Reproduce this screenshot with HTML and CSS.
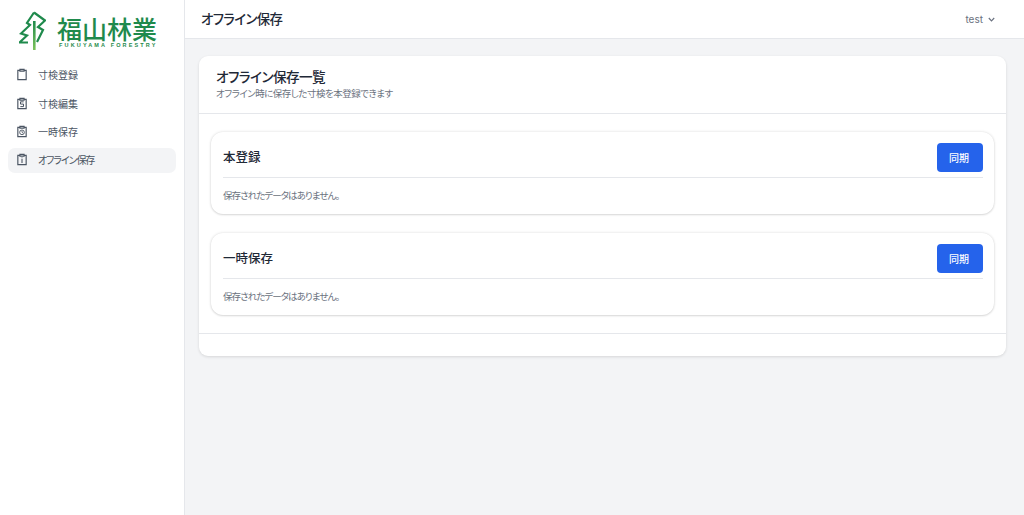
FILE: index.html
```html
<!DOCTYPE html>
<html lang="ja">
<head>
<meta charset="utf-8">
<title>オフライン保存</title>
<link rel="stylesheet" href="styles.css">
</head>
<body>
<div class="app">
  <aside class="sidebar">
    <div class="logo">
      <svg class="logo-mark" width="27" height="40" viewBox="0 0 27 40" fill="none">
        <defs>
          <linearGradient id="trunk" x1="0" y1="0" x2="0" y2="1">
            <stop offset="0" stop-color="#1f8a4c"/>
            <stop offset="1" stop-color="#7cc35a"/>
          </linearGradient>
        </defs>
        <path d="M15 1.5L8 12L11 14L2 22.5L8 24.5L.5 31.5H9" stroke="#1f8a4c" stroke-width="2.2"/>
        <path d="M15 1.5L26 9.5L19 16L24 19L18 31" stroke="#1f8a4c" stroke-width="2.2"/>
        <rect x="14" y="10" width="2.6" height="29" fill="url(#trunk)"/>
      </svg>
      <div class="logo-text">
        <div class="logo-name">福山林業</div>
        <div class="logo-sub">FUKUYAMA FORESTRY</div>
      </div>
    </div>
    <nav class="nav">
      <a class="nav-item">
        <svg class="nav-icon" viewBox="0 0 12 14" fill="none"><path d="M3.5 2H1V13.2H11V2H8.5M3.5 .9H8.5V3H3.5Z" stroke="currentColor" stroke-width="1.4"/></svg>
        <span>寸検登録</span>
      </a>
      <a class="nav-item">
        <svg class="nav-icon" viewBox="0 0 12 14" fill="none"><path d="M3.5 2H1V13.2H11V2H8.5M3.5 .9H8.5V3H3.5Z" stroke="currentColor" stroke-width="1.4"/><path d="M8 5H4.2V7.7H7.8V10.7H4" stroke="currentColor" stroke-width="1.2"/></svg>
        <span>寸検編集</span>
      </a>
      <a class="nav-item">
        <svg class="nav-icon" viewBox="0 0 12 14" fill="none"><path d="M3.5 2H1V13.2H11V2H8.5M3.5 .9H8.5V3H3.5Z" stroke="currentColor" stroke-width="1.4"/><circle cx="6" cy="8" r="2.8" stroke="currentColor" stroke-width="1.1"/><path d="M6 6.3V8L7.4 9" stroke="currentColor"/></svg>
        <span>一時保存</span>
      </a>
      <a class="nav-item active">
        <svg class="nav-icon" viewBox="0 0 12 14" fill="none"><path d="M3.5 2H1V13.2H11V2H8.5M3.5 .9H8.5V3H3.5Z" stroke="currentColor" stroke-width="1.4"/><path d="M6 6.5V11.3M6 4.6V5.6" stroke="currentColor" stroke-width="1.3"/></svg>
        <span>オフライン保存</span>
      </a>
    </nav>
  </aside>
  <div class="body">
    <header class="topbar">
      <div class="topbar-title">オフライン保存</div>
      <div class="user">
        <span>test</span>
        <svg width="7" height="5" viewBox="0 0 7 5" fill="none"><path d="M.8 1L3.5 3.8L6.2 1" stroke="#6b7280" stroke-width="1.2"/></svg>
      </div>
    </header>
    <main class="main">
      <section class="card">
        <div class="card-head">
          <h1>オフライン保存一覧</h1>
          <p>オフライン時に保存した寸検を本登録できます</p>
        </div>
        <div class="card-body">
          <div class="panel">
            <div class="panel-head">
              <h2>本登録</h2>
              <button class="btn">同期</button>
            </div>
            <p class="empty">保存されたデータはありません。</p>
          </div>
          <div class="panel">
            <div class="panel-head">
              <h2>一時保存</h2>
              <button class="btn">同期</button>
            </div>
            <p class="empty">保存されたデータはありません。</p>
          </div>
        </div>
        <div class="card-foot"></div>
      </section>
    </main>
  </div>
</div>
</body>
</html>
```
FILE: styles.css
```css
* { box-sizing: border-box; }
html, body { margin: 0; height: 100%; }
body {
  font-family: "Noto Sans CJK JP", "Noto Sans", sans-serif;
  font-feature-settings: "palt";
  background: #f3f4f6;
  color: #1f2937;
  overflow: hidden;
}
.app { display: flex; height: 515px; }
.sidebar {
  width: 185px;
  flex: none;
  background: #fff;
  border-right: 1px solid #e5e7eb;
  padding: 0 8px;
}
.logo {
  height: 62.5px;
  display: flex;
  align-items: flex-start;
  padding: 11px 0 0 11px;
  gap: 11px;
}
.logo-mark { flex: none; }
.logo-text { margin-top: 5px; }
.logo-name {
  font-size: 25px;
  line-height: 24px;
  font-weight: 500;
  color: #1f8a4c;
  white-space: nowrap;
  font-feature-settings: normal;
}
.logo-sub {
  font-family: "Liberation Sans", sans-serif;
  font-size: 5.5px;
  line-height: 7px;
  font-weight: 700;
  letter-spacing: 2.15px;
  color: #1f8a4c;
  white-space: nowrap;
  margin: 2px 0 0 2px;
}
.nav { display: flex; flex-direction: column; gap: 3px; }
.nav-item {
  display: flex;
  align-items: center;
  height: 25.4px;
  padding: 0 9px;
  border-radius: 7px;
  font-size: 10px;
  color: #4b5563;
}
.nav-item span { margin-left: 11px; margin-top: -1px; }
.nav-item.active { background: #f3f4f6; }
.nav-item.active span { letter-spacing: -1.1px; }
.nav-icon { width: 10px; height: 13px; flex: none; color: #4b5563; margin-top: -1px; }
.body { flex: 1; min-width: 0; display: flex; flex-direction: column; }
.topbar {
  height: 39px;
  flex: none;
  background: #fff;
  border-bottom: 1px solid #e5e7eb;
  display: flex;
  align-items: center;
  justify-content: space-between;
  padding: 0 29px 2px 16px;
}
.topbar-title { font-size: 13.4px; letter-spacing: -.6px; font-weight: 500; color: #1f2937; }
.user {
  display: flex;
  align-items: center;
  gap: 5px;
  margin-top: 2px;
  font-family: "Inter", sans-serif;
  font-size: 10px;
  color: #6b7280;
}
.main { padding: 17px 18px 0 14px; }
.card {
  background: #fff;
  border-radius: 9px;
  box-shadow: 0 1px 3px rgba(0,0,0,.12);
}
.card-head {
  height: 58px;
  padding: 11px 17px 0;
  border-bottom: 1px solid #e5e7eb;
}
h1 { margin: 0; font-size: 13.6px; letter-spacing: -.55px; line-height: 18px; font-weight: 500; color: #1f2937; }
.card-head p { margin: 1px 0 0; font-size: 9.5px; letter-spacing: -.5px; line-height: 14px; color: #6b7280; }
.card-body {
  padding: 18px 12px 18px;
  display: flex;
  flex-direction: column;
  gap: 19px;
}
.panel {
  background: #fff;
  border-radius: 12px;
  box-shadow: 0 0 3px rgba(0,0,0,.14), 0 1px 2px rgba(0,0,0,.1);
  padding: 11px 11px 0 12px;
  height: 82px;
}
.panel-head {
  height: 35px;
  display: flex;
  align-items: flex-start;
  justify-content: space-between;
  border-bottom: 1px solid #e5e7eb;
}
h2 { margin: 5px 0 0; font-size: 12.5px; line-height: 17px; font-weight: 500; color: #1f2937; }
.btn {
  width: 46px;
  height: 29px;
  border: 0;
  border-radius: 4px;
  background: #2563eb;
  color: #fff;
  font: inherit;
  font-size: 10px;
  font-weight: 500;
  padding: 0 2px 0 0;
}
.empty { margin: 0; padding-top: 10px; font-size: 9.5px; letter-spacing: -.95px; line-height: 14px; color: #6b7280; }
.card-foot { height: 23px; border-top: 1px solid #e5e7eb; }
```
